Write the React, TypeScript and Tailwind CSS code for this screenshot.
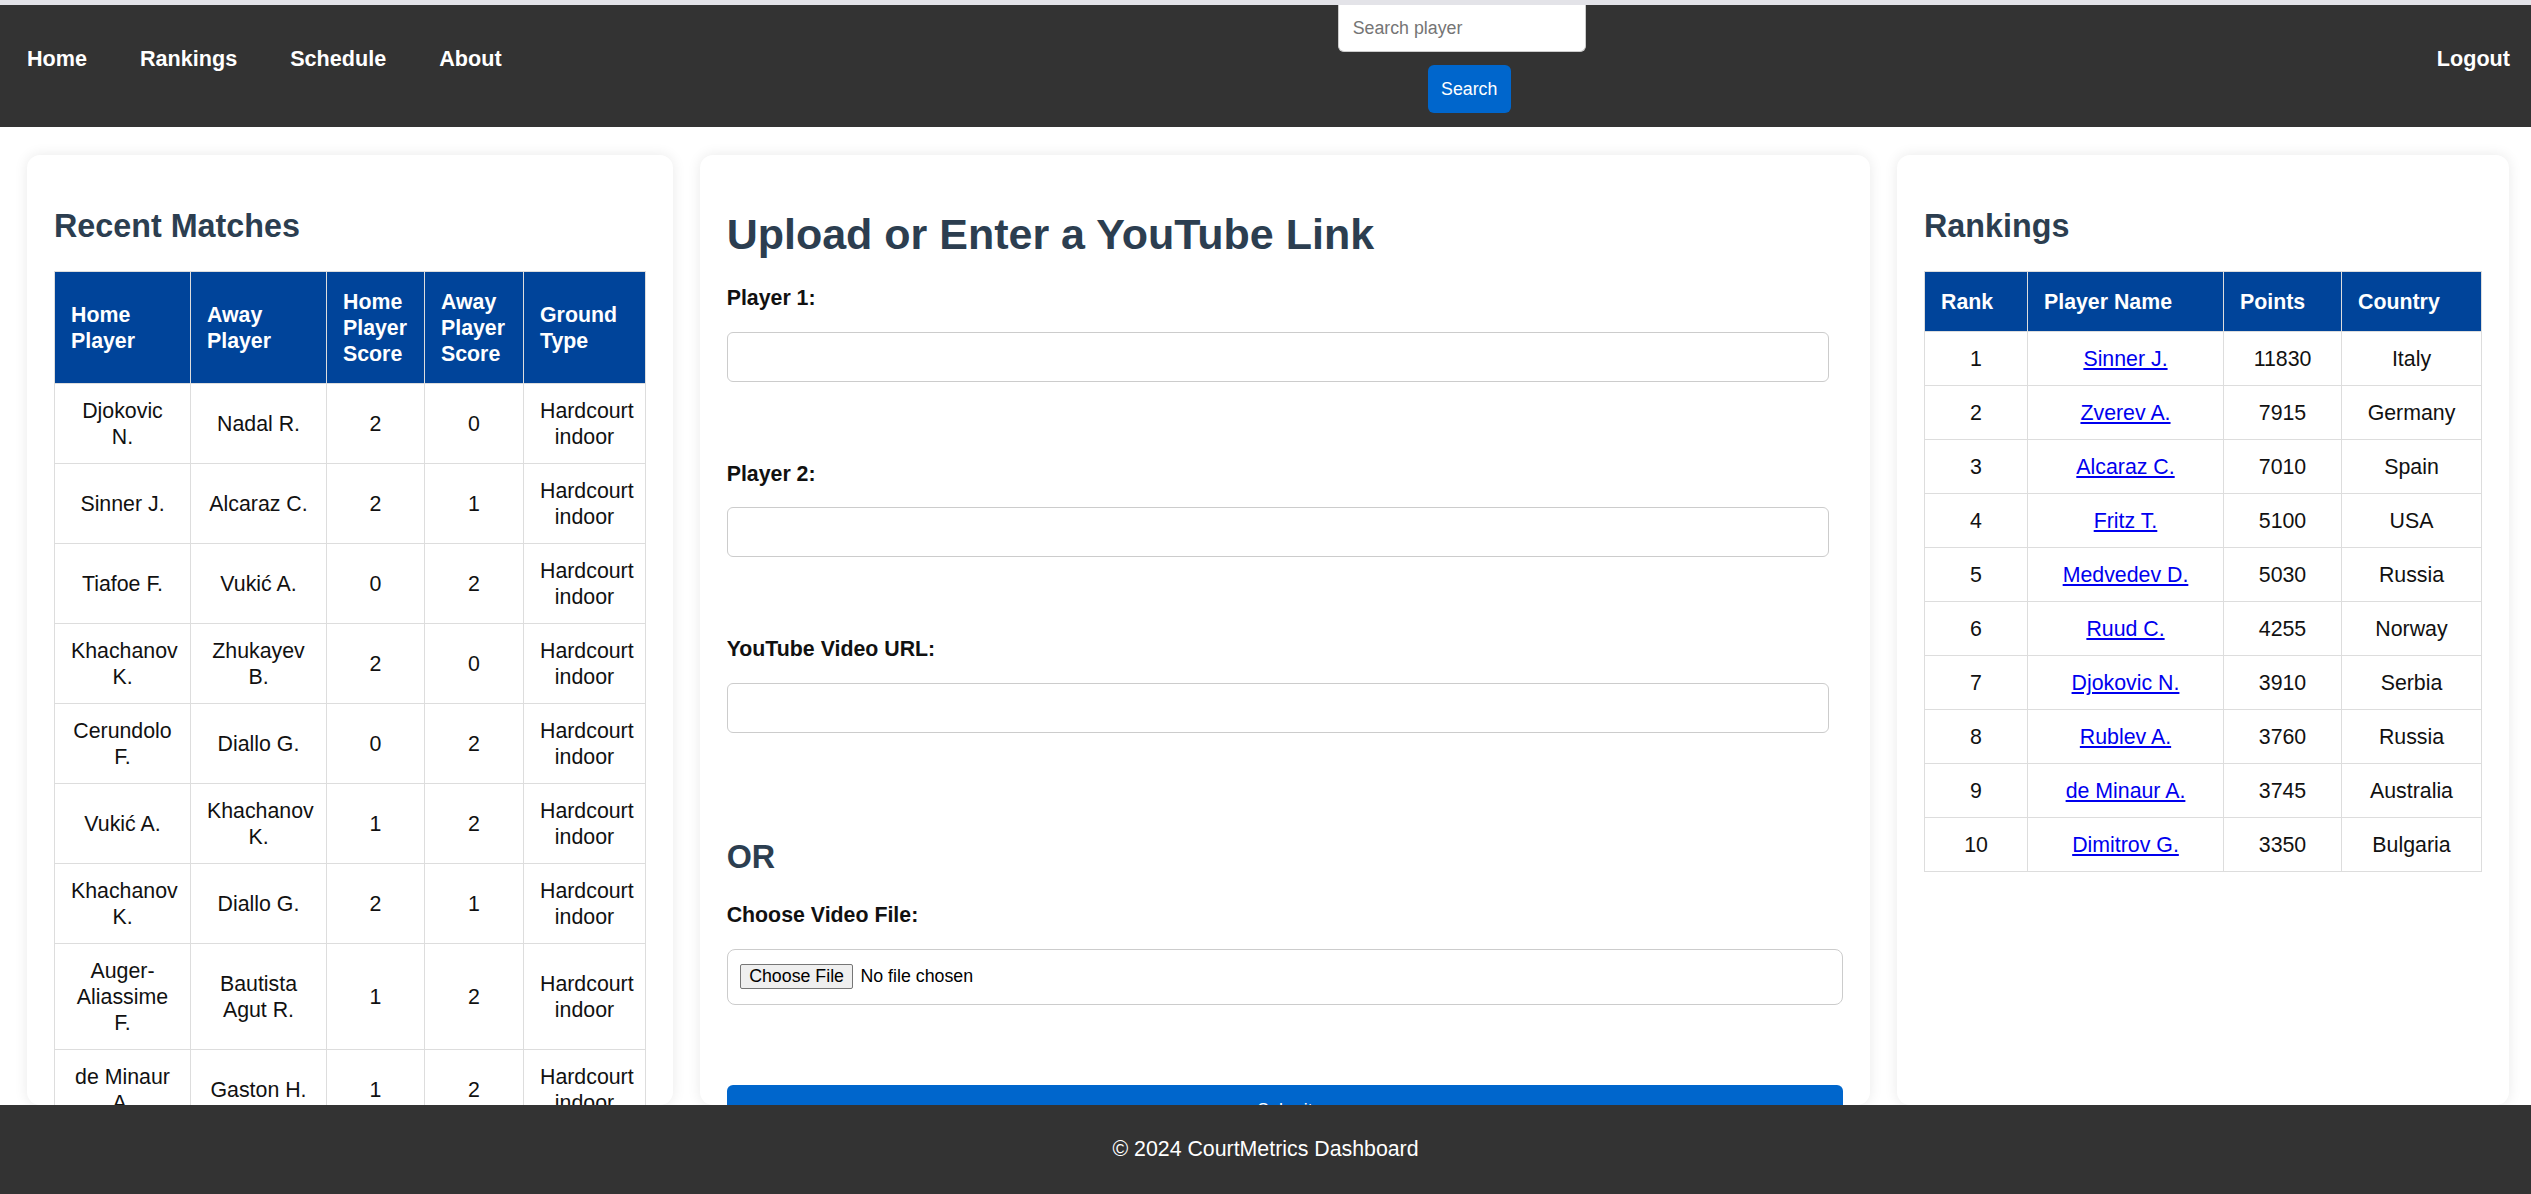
import React from "react"

const matches = [
  { home: "Djokovic N.", away: "Nadal R.", hs: 2, as: 0 },
  { home: "Sinner J.", away: "Alcaraz C.", hs: 2, as: 1 },
  { home: "Tiafoe F.", away: "Vukić A.", hs: 0, as: 2 },
  { home: "Khachanov K.", away: "Zhukayev B.", hs: 2, as: 0 },
  { home: "Cerundolo F.", away: "Diallo G.", hs: 0, as: 2 },
  { home: "Vukić A.", away: "Khachanov K.", hs: 1, as: 2 },
  { home: "Khachanov K.", away: "Diallo G.", hs: 2, as: 1 },
  { home: "Auger-Aliassime F.", away: "Bautista Agut R.", hs: 1, as: 2 },
  { home: "de Minaur A.", away: "Gaston H.", hs: 1, as: 2 },
  { home: "Fritz T.", away: "Ruud C.", hs: 2, as: 0 },
]

const rankings = [
  { rank: 1, name: "Sinner J.", points: 11830, country: "Italy" },
  { rank: 2, name: "Zverev A.", points: 7915, country: "Germany" },
  { rank: 3, name: "Alcaraz C.", points: 7010, country: "Spain" },
  { rank: 4, name: "Fritz T.", points: 5100, country: "USA" },
  { rank: 5, name: "Medvedev D.", points: 5030, country: "Russia" },
  { rank: 6, name: "Ruud C.", points: 4255, country: "Norway" },
  { rank: 7, name: "Djokovic N.", points: 3910, country: "Serbia" },
  { rank: 8, name: "Rublev A.", points: 3760, country: "Russia" },
  { rank: 9, name: "de Minaur A.", points: 3745, country: "Australia" },
  { rank: 10, name: "Dimitrov G.", points: 3350, country: "Bulgaria" },
]

const th = "border border-[#dddddd] bg-[#00449a] text-white font-bold text-left align-middle px-[16px] py-[16.5px] leading-[26px]"
const td = "border border-[#dddddd] text-center align-middle px-[16px] py-[13.5px] leading-[26px]"

function Card({ children, className }: { children: React.ReactNode; className: string }) {
  return (
    <div className={"bg-white rounded-[13px] shadow-[0_0_14px_rgba(0,0,0,0.09)] px-[27px] pt-[27px] " + className}>
      {children}
    </div>
  )
}

function Label({ children }: { children: React.ReactNode }) {
  return <label className="block font-bold text-[21.33px] leading-[24.5px] mb-[21px]">{children}</label>
}

export default function App() {
  return (
    <div
      className="h-screen flex flex-col overflow-hidden bg-white text-[#111111] text-[21.33px]"
      style={{ fontFamily: '"Liberation Sans", Arial, sans-serif' }}
    >
      <div className="h-[5px] bg-[#e3e3e8] shrink-0" />

      {/* Navbar */}
      <nav className="h-[122px] shrink-0 bg-[#333333] flex items-center justify-between pl-[27px] pr-[21px] pb-[14px]">
        <div className="flex items-center gap-[53px] text-white font-bold text-[21.6px]">
          <a>Home</a>
          <a>Rankings</a>
          <a>Schedule</a>
          <a>About</a>
        </div>
        <form className="w-[263px] h-full flex flex-col items-center">
          <input
            placeholder="Search player"
            className="w-[248px] h-[47px] mr-[15px] bg-white border border-[#cccccc] border-t-0 rounded-b-[6px] px-[14px] text-[17.78px] text-black placeholder:text-[#757575] outline-none"
          />
          <button
            type="button"
            className="mt-[13px] h-[48px] px-[13.5px] bg-[#0066cc] text-white text-[17.78px] rounded-[6px]"
          >
            Search
          </button>
        </form>
        <a className="text-white font-bold text-[21.6px]">Logout</a>
      </nav>

      {/* Main */}
      <main className="flex-1 min-h-0 overflow-hidden flex gap-[26.67px] pt-[28px] pl-[27px] pr-[22px]">
        <Card className="w-[646px] shrink-0">
          <h2 className="text-[32.3px] leading-[36.8px] font-bold text-[#2c3e50] mt-[26px] mb-[26.67px]">Recent Matches</h2>
          <table className="border-collapse table-fixed w-[591px]">
            <colgroup>
              <col className="w-[136px]" />
              <col className="w-[136px]" />
              <col className="w-[98px]" />
              <col className="w-[99px]" />
              <col className="w-[122px]" />
            </colgroup>
            <thead>
              <tr>
                <th className={th}>Home Player</th>
                <th className={th}>Away Player</th>
                <th className={th}>Home Player Score</th>
                <th className={th}>Away Player Score</th>
                <th className={th}>Ground Type</th>
              </tr>
            </thead>
            <tbody>
              {matches.map((m, i) => (
                <tr key={i}>
                  <td className={td}>{m.home}</td>
                  <td className={td}>{m.away}</td>
                  <td className={td}>{m.hs}</td>
                  <td className={td}>{m.as}</td>
                  <td className={td}>Hardcourt indoor</td>
                </tr>
              ))}
            </tbody>
          </table>
        </Card>

        <Card className="flex-1 min-w-0">
          <h1 className="text-[43px] leading-[49px] font-bold text-[#2c3e50] mt-[28px] mb-[27px]">
            Upload or Enter a YouTube Link
          </h1>
          <form>
            <div className="mb-[80px]">
              <Label>Player 1:</Label>
              <input className="block w-[calc(100%-14px)] h-[50px] border border-[#cccccc] rounded-[6px] px-[13px] outline-none" />
            </div>
            <div className="mb-[80px]">
              <Label>Player 2:</Label>
              <input className="block w-[calc(100%-14px)] h-[50px] border border-[#cccccc] rounded-[6px] px-[13px] outline-none" />
            </div>
            <div>
              <Label>YouTube Video URL:</Label>
              <input className="block w-[calc(100%-14px)] h-[50px] border border-[#cccccc] rounded-[6px] px-[13px] outline-none" />
            </div>
            <h2 className="text-[32.3px] leading-[36.8px] font-bold text-[#2c3e50] mt-[106px] mb-[28px]">OR</h2>
            <div>
              <Label>Choose Video File:</Label>
              <div className="h-[56px] border border-[#cccccc] rounded-[8px] pl-[12px] flex items-center text-[17.78px] text-black">
                <span className="h-[25px] px-[8.5px] flex items-center bg-[#efefef] border border-[#767676] rounded-[2px] leading-none">
                  Choose File
                </span>
                <span className="ml-[7px]">No file chosen</span>
              </div>
            </div>
            <button
              type="button"
              className="mt-[80px] w-full h-[52px] bg-[#0066cc] text-white text-[17.78px] rounded-[6px]"
            >
              Submit
            </button>
          </form>
        </Card>

        <Card className="w-[612px] shrink-0">
          <h2 className="text-[32.3px] leading-[36.8px] font-bold text-[#2c3e50] mt-[26px] mb-[26.67px]">Rankings</h2>
          <table className="border-collapse table-fixed w-[557px]">
            <colgroup>
              <col className="w-[103px]" />
              <col className="w-[196px]" />
              <col className="w-[118px]" />
              <col className="w-[140px]" />
            </colgroup>
            <thead>
              <tr>
                <th className={th}>Rank</th>
                <th className={th}>Player Name</th>
                <th className={th}>Points</th>
                <th className={th}>Country</th>
              </tr>
            </thead>
            <tbody>
              {rankings.map((r) => (
                <tr key={r.rank}>
                  <td className={td}>{r.rank}</td>
                  <td className={td}>
                    <a href="#" className="text-[#0000ee] underline">{r.name}</a>
                  </td>
                  <td className={td}>{r.points}</td>
                  <td className={td}>{r.country}</td>
                </tr>
              ))}
            </tbody>
          </table>
        </Card>
      </main>

      {/* Footer */}
      <footer className="h-[89px] shrink-0 bg-[#333333] text-white flex items-center justify-center text-[21.33px]">
        © 2024 CourtMetrics Dashboard
      </footer>
    </div>
  )
}
